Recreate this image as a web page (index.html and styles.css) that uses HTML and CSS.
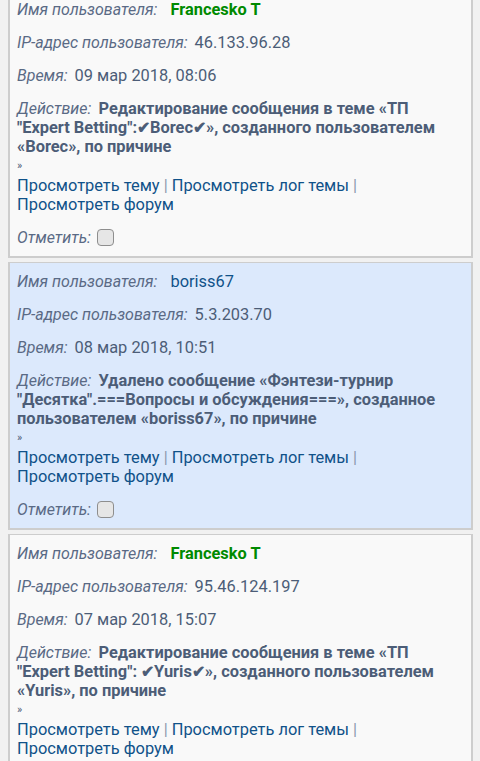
FILE: index.html
```html
<!DOCTYPE html>
<html lang="ru">
<head>
<meta charset="utf-8">
<link rel="stylesheet" href="styles.css">
</head>
<body>
<div class="list">
  <div class="entry">
    <div class="row"><span class="label">Имя пользователя:</span> <span class="user green">Francesko T</span></div>
    <div class="row"><span class="label">IP-адрес пользователя:</span> <span class="val">46.133.96.28</span></div>
    <div class="row"><span class="label">Время:</span> <span class="val">09 мар 2018, 08:06</span></div>
    <div class="row action"><span class="label">Действие:</span> <b class="act">Редактирование сообщения в теме «ТП "Expert Betting":✔Borec✔», созданного пользователем «Borec», по причине</b>
      <div class="quote">»</div>
      <div class="links"><a>Просмотреть тему</a> <span class="sep">|</span> <a>Просмотреть лог темы</a> <span class="sep">|</span> <a>Просмотреть форум</a></div>
    </div>
    <div class="row"><span class="label">Отметить:</span> <span class="check"></span></div>
  </div>
  <div class="entry blue">
    <div class="row"><span class="label">Имя пользователя:</span> <span class="user link">boriss67</span></div>
    <div class="row"><span class="label">IP-адрес пользователя:</span> <span class="val">5.3.203.70</span></div>
    <div class="row"><span class="label">Время:</span> <span class="val">08 мар 2018, 10:51</span></div>
    <div class="row action"><span class="label">Действие:</span> <b class="act">Удалено сообщение «Фэнтези-турнир "Десятка".===Вопросы и обсуждения===», созданное пользователем «boriss67», по причине</b>
      <div class="quote">»</div>
      <div class="links"><a>Просмотреть тему</a> <span class="sep">|</span> <a>Просмотреть лог темы</a> <span class="sep">|</span> <a>Просмотреть форум</a></div>
    </div>
    <div class="row"><span class="label">Отметить:</span> <span class="check"></span></div>
  </div>
  <div class="entry">
    <div class="row"><span class="label">Имя пользователя:</span> <span class="user green">Francesko T</span></div>
    <div class="row"><span class="label">IP-адрес пользователя:</span> <span class="val">95.46.124.197</span></div>
    <div class="row"><span class="label">Время:</span> <span class="val">07 мар 2018, 15:07</span></div>
    <div class="row action"><span class="label">Действие:</span> <b class="act">Редактирование сообщения в теме «ТП "Expert Betting": ✔Yuris✔», созданного пользователем «Yuris», по причине</b>
      <div class="quote">»</div>
      <div class="links"><a>Просмотреть тему</a> <span class="sep">|</span> <a>Просмотреть лог темы</a> <span class="sep">|</span> <a>Просмотреть форум</a></div>
    </div>
    <div class="row"><span class="label">Отметить:</span> <span class="check"></span></div>
  </div>
</div>
</body>
</html>
```
FILE: styles.css
```css
html, body {
  margin: 0;
  padding: 0;
  background: #f1f1f1;
}
body {
  font-family: Roboto, "Noto Sans", sans-serif;
  font-size: 16.4px;
  line-height: 19px;
  color: #4c5d77;
  overflow: hidden;
}
.list {
  margin: -10px 7px 0 8px;
  display: flex;
  flex-direction: column;
  gap: 4px;
}
.entry {
  background: #f9f9f9;
  border: 2px solid #cdcdcd;
  border-top-width: 1px;
  padding: 9px 10px 9px 7px;
  display: flex;
  flex-direction: column;
  gap: 14px;
}
.entry.blue {
  background: #dce9fc;
}
.row {
  line-height: 19px;
}
.label {
  font-style: italic;
  font-size: 16px;
  line-height: 16px;
  color: #5a6a85;
  margin-right: 3px;
}
.user {
  font-weight: bold;
  margin-left: 6px;
}
.green { color: #008a00; }
.user.link { color: #105289; font-weight: normal; }
.val { color: #4c5d77; }
.act {
  color: #4c5d77;
}
.quote {
  font-size: 11px;
  line-height: 20px;
  color: #4c5d77;
}
.links a {
  color: #105289;
}
.sep {
  color: #8a98ad;
}
.check {
  display: inline-block;
  width: 15px;
  height: 15px;
  border: 1.5px solid #8e8e8e;
  border-radius: 4px;
  background: #e6e6e6;
  vertical-align: -3px;
  margin-left: -1px;
}
```
